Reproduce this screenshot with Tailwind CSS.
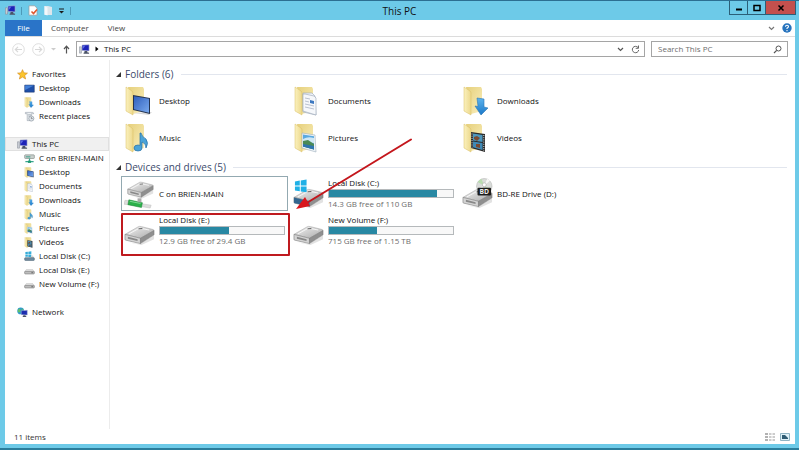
<!DOCTYPE html>
<html lang="en">
<head>
  <meta charset="UTF-8" />
  <meta name="viewport" content="width=device-width, initial-scale=1.0"/>
  <title>This PC</title>
  <script src="https://cdn.jsdelivr.net/npm/@tailwindcss/browser@4"></script>
</head>

<body class="min-h-screen flex flex-col bg-[#6dcae8] border-t border-t-[#2c6f92] border-b-2 border-b-[#2a7d9b] font-['Open_Sans','Noto_Sans',sans-serif] text-[8px] leading-[10px] text-[#111]">

  <!-- icons -->
  <svg class="absolute size-0" aria-hidden="true">
    <defs>
      <linearGradient id="flap" x1="0" x2="1"><stop offset="0" stop-color="#fbf1bd"/><stop offset="1" stop-color="#ecd88c"/></linearGradient>
      <linearGradient id="back" x1="0" x2="1" y2="1"><stop offset="0" stop-color="#e6d07c"/><stop offset="1" stop-color="#faefbd"/></linearGradient>
      <linearGradient id="screen" x2="1" y2="1"><stop offset="0" stop-color="#2f5fbd"/><stop offset="1" stop-color="#79a9ee"/></linearGradient>
      <linearGradient id="metal" x2="1" y2="1"><stop offset="0" stop-color="#f4f4f4"/><stop offset="1" stop-color="#a9a9a9"/></linearGradient>
      <linearGradient id="arrowBlue" x2="0" y2="1"><stop offset="0" stop-color="#5db4ee"/><stop offset="1" stop-color="#1a78c8"/></linearGradient>
    </defs>
    <symbol id="folder" viewBox="0 0 30 30">
      <path d="M4 1h15l1 2v22l-11 3z" fill="url(#back)"/>
      <path d="M2 1l6 4q1 1 1 2v22l-7-4z" fill="url(#flap)" stroke="#d9bd62" stroke-width=".5"/>
    </symbol>
    <symbol id="desktop" viewBox="0 0 30 30">
      <use href="#folder"/>
      <path d="M9 27l19-1-3 3z" fill="#d8d8d8"/>
      <path d="M9 9l17 3v16l-17-4z" fill="#24334f"/>
      <path d="M10 10.200l15 2.600v14l-15-3.600z" fill="url(#screen)"/>
    </symbol>
    <symbol id="documents" viewBox="0 0 30 30">
      <use href="#folder"/>
      <path d="M10 7h9l3 3 1 19-13-3z" fill="#eef2f8" stroke="#9aa7b8" stroke-width=".6"/>
      <path d="M12 8l9 2 2 2v17l-13-4V8z" fill="#f6f8fb" stroke="#98a4b6" stroke-width=".6"/>
      <path d="M12 12l5 1M12 15l4 1M12 18l9 2M12 21l9 2" stroke="#a9b3c4" stroke-width=".8"/>
      <path d="M17 14l4 1v3l-4-1z" fill="#3d78c0"/>
    </symbol>
    <symbol id="downloads" viewBox="0 0 30 30">
      <use href="#folder"/>
      <path d="M15 12l7 1v8l4 1-7 7-6-9 3 .5z" fill="url(#arrowBlue)" stroke="#2a76b5" stroke-width=".6"/>
    </symbol>
    <symbol id="music" viewBox="0 0 30 30">
      <use href="#folder"/>
      <path d="M17 10q1 4 5 6 3 4 0 9 0-5-4-6v6q0 3-4 3-4 0-4-3t4-3l2 .4V10z" fill="#4aa3d8" stroke="#226fa5" stroke-width=".7"/>
    </symbol>
    <symbol id="pictures" viewBox="0 0 30 30">
      <use href="#folder"/>
      <path d="M9 10l13 2 1 17-14-4z" fill="#eef3f7" stroke="#9fb0be" stroke-width=".6"/>
      <path d="M10 11.500l11 1.700v13.300l-11-3z" fill="#5aa9e0"/>
      <path d="M10 16q5-3 11-1v5l-11-1z" fill="#cfe8f5"/>
      <path d="M10 18l5-1 6 4v5.500l-11-3z" fill="#4c8a55"/>
      <path d="M10 21l11 2v3.500l-11-3z" fill="#2f75b0"/>
    </symbol>
    <symbol id="videos" viewBox="0 0 30 30">
      <use href="#folder"/>
      <path d="M9 9l14 2v18l-14-4z" fill="#2b2b2b"/>
      <path d="M11 10.500l9.500 1.500v7l-9.500-1.500z" fill="#4d97bd"/>
      <path d="M11 18.500l9.500 1.500v7l-9.500-2.700z" fill="#4089b5"/>
      <path d="M12 14l3-1 3 2-3 3-3-2zM14 21l4 0 0 4-4-1z" fill="#7a4a30"/>
      <path d="M10 10.500v14M21.800 12v16" stroke="#eee" stroke-width=".9" stroke-dasharray="1 1.200"/>
    </symbol>
    <symbol id="drive" viewBox="0 0 32 32">
      <path d="M4 28l13 2 14-9v4l-13 6z" fill="#e2e2e2"/>
      <path d="M1 20l14-8q1-.5 3 0l12 3q1 .5 1 1l-14 8z" fill="url(#metal)" stroke="#a5a5a5" stroke-width=".6"/>
      <path d="M1 20l16 4v5.500L2 26q-1 0-1-1z" fill="#d4d4d4" stroke="#8a8a8a" stroke-width=".7"/>
      <path d="M17 24l14-8v4.500l-14 9z" fill="#8f8f8f" stroke="#777" stroke-width=".5"/>
      <path d="M4 22.500l10 2.500v1.800L4 24.500z" fill="#888"/>
      <path d="M5 19.500l11-6 10 2" stroke="#fff" stroke-width=".8" fill="none"/>
      <path d="M15 14.200l4-.3" stroke="#555" stroke-width=".9"/>
    </symbol>
    <symbol id="netdrive" viewBox="0 0 32 32">
      <svg x="3" y="-7" width="28" height="30" viewBox="0 0 32 32"><use href="#drive"/></svg>
      <path d="M1 23l8 1 12 3 7 1-1 3-6-1-13-2-8-1z" fill="#dcdcdc" stroke="#bbb" stroke-width=".5"/>
      <path d="M5 22.500l14 3-1 5-14-3z" fill="#2bb04a" stroke="#168033" stroke-width=".5"/>
      <path d="M6 24l11 2.300" stroke="#8be09d" stroke-width=".9"/>
      <path d="M14 21h4v4h-4z" fill="#aaa"/>
    </symbol>
    <symbol id="windrive" viewBox="0 0 32 32">
      <use href="#drive"/>
      <path d="M1 20l16 4v5.500L2 26q-1 0-1-1z" fill="#33668f"/>
      <path d="M2 3.500l5-.8v5H2zM8 2.500l6-1v6.200H8zM2 8.700h5v5L2 13zM8 8.700h6v6L8 13.900z" fill="#1fb0e6"/>
    </symbol>
    <symbol id="pc" viewBox="0 0 12 12">
      <path d="M.5 3h2.200v7H.5z" fill="#c9cdd4" stroke="#7b828c" stroke-width=".5"/>
      <path d="M3.300 1.200l7.700-.4v6.700l-7.700-.5z" fill="#1c22b8" stroke="#b9bfd0" stroke-width=".6"/>
      <path d="M4 1.800l3-.1-2 3-1 .6z" fill="#5c69e0"/>
      <path d="M6 7.500h3v1.500l2 .5v1H5v-1l1-.5z" fill="#4b5366"/>
    </symbol>
    <symbol id="monitor" viewBox="0 0 12 12">
      <path d="M.8 2.300h10.400v7.700H.8z" fill="#1e4fa8" stroke="#17336b" stroke-width=".6"/>
      <path d="M1.200 2.700h9.600l-9.600 5z" fill="#4480d8"/>
    </symbol>
    <symbol id="star" viewBox="0 0 12 12">
      <path d="M6 .7l1.500 3.500 3.900.3-3 2.500 1 3.900L6 8.800 2.600 10.900l1-3.900-3-2.500 3.900-.3z" fill="#fbc52d" stroke="#d68f1f" stroke-width=".7"/>
    </symbol>
    <symbol id="recent" viewBox="0 0 12 12">
      <path d="M1.500 1.500h7.500q1.500 0 1.500 1.500H8v7.500H3.500V3H1.500z" fill="#edf0f3" stroke="#8e98a3" stroke-width=".6"/>
      <path d="M4.500 4h3M4.500 5.500h3" stroke="#8e98a3" stroke-width=".6"/>
      <circle cx="8" cy="8.200" r="2.800" fill="#e0e6ec" stroke="#77828e" stroke-width=".6"/>
      <path d="M8 6.500v1.800h1.500" stroke="#555" stroke-width=".6" fill="none"/>
    </symbol>
    <symbol id="sdrive" viewBox="0 0 12 12">
      <path d="M2.500 5h7l1.800 2.500H.7z" fill="#e3e3e3" stroke="#aaa" stroke-width=".4"/>
      <rect x=".7" y="7" width="10.600" height="2.800" rx=".8" fill="#bdbdbd" stroke="#737373" stroke-width=".6"/>
      <path d="M8 8.400h2" stroke="#444" stroke-width=".7"/>
    </symbol>
    <symbol id="swindrive" viewBox="0 0 12 12">
      <path d="M1.500 1.200l2.700-.3v2.500H1.500zM4.700.8l3.300-.4v3H4.700zM1.500 3.900h2.700v2.500l-2.700-.2zM4.700 3.900H8v3l-3.300-.4z" fill="#35acd8"/>
      <path d="M8 5h1.500l1.800 2.500H7z" fill="#d5d5d5"/>
      <rect x=".7" y="7.300" width="10.600" height="3" rx=".8" fill="#6e8ba0" stroke="#4c6373" stroke-width=".6"/>
    </symbol>
    <symbol id="snetdrive" viewBox="0 0 12 12">
      <rect x=".7" y="2" width="10.600" height="4" rx=".8" fill="#c9cfcc" stroke="#6f7a75" stroke-width=".6"/>
      <path d="M2 4.200h5" stroke="#2f9c86" stroke-width="1"/>
      <path d="M6 6v3M1.500 9.500h9" stroke="#3aa58f" stroke-width="1.300"/>
      <rect x="4.300" y="8.300" width="3.400" height="2.500" fill="#1f9a70"/>
    </symbol>
    <symbol id="network" viewBox="0 0 12 12">
      <circle cx="4" cy="4.300" r="3.700" fill="#2f9ad0"/>
      <path d="M2 1.700q2 0 2 2T1.500 6Q0 4 2 1.700zM5 1l2 2-1.500 1z" fill="#5fc06a"/>
      <path d="M4.700 4l6.500-.4v5.200l-6.500-.4z" fill="#1c2cb0" stroke="#aeb8d4" stroke-width=".5"/>
      <path d="M7 9h2l1.500 1.800H6z" fill="#4b5366"/>
    </symbol>
  </svg>

  <header class="relative h-[19px] flex items-center px-[5px]">
    <div class="flex items-center gap-[5px]">
      <svg class="size-[11px]"><use href="#pc"/></svg>
      <span class="w-px h-2 bg-[#4d9ab8]"></span>
      <button aria-label="Properties" class="ml-px">
        <svg class="w-[10px] h-[11px]" viewBox="0 0 10 11"><path d="M1 .8h5.500L9 3v7.200H1z" fill="#fff" stroke="#9a9a9a" stroke-width=".7"/><path d="M3.500 6.500l2 2L9 4.500" fill="none" stroke="#e0572e" stroke-width="1.600"/></svg>
      </button>
      <button aria-label="New folder" class="ml-px">
        <svg class="w-[9px] h-[11px]" viewBox="0 0 9 11"><path d="M.5 1H4l4 1v8H.5z" fill="#dde6ec"/><path d="M.5 1l3 1.500V10.500L.5 9.500z" fill="#f4f8fb"/></svg>
      </button>
      <button aria-label="Customize toolbar">
        <svg class="w-[7px] h-[6px]" viewBox="0 0 7 6"><path d="M1 1h5" stroke="#1a1a1a"/><path d="M1 3h5L3.500 5.500z" fill="#1a1a1a"/></svg>
      </button>
      <span class="w-px h-2 bg-[#4d9ab8]"></span>
    </div>
    <h1 class="absolute inset-x-0 text-center text-[10px] leading-[18px] pointer-events-none">This PC</h1>
    <div class="ml-auto -mr-[2px] self-start flex h-[14px] border border-t-0 border-[#2b5f78]">
      <button aria-label="Minimize" class="w-[18px] flex items-center justify-center border-r border-[#2b5f78]">
        <svg class="w-2 h-2" viewBox="0 0 8 8"><path d="M1 5.500h6" stroke="#000" stroke-width="2"/></svg>
      </button>
      <button aria-label="Maximize" class="w-[18px] flex items-center justify-center border-r border-[#2b5f78]">
        <svg class="w-2 h-2" viewBox="0 0 8 8"><path d="M1 1.500h6v5H1z" fill="none" stroke="#000" stroke-width="1.500"/></svg>
      </button>
      <button aria-label="Close" class="w-[29px] flex items-center justify-center bg-[#c3504d]">
        <svg class="w-2 h-2" viewBox="0 0 8 8"><path d="M1.500 1.500l5 5M6.500 1.500l-5 5" stroke="#000" stroke-width="1.500"/></svg>
      </button>
    </div>
  </header>

  <div class="flex-1 flex flex-col mx-[5px] mr-1 mb-[4px] bg-white">
    <nav class="h-[17px] flex items-stretch border-b border-[#dcdcdc] text-[#444]">
      <button class="w-[37px] bg-[#2a74c8] text-white">File</button>
      <button class="ml-[9px]">Computer</button>
      <button class="ml-[19px]">View</button>
      <div class="ml-auto flex items-center gap-[7px] pr-[3px]">
        <button aria-label="Expand ribbon"><svg class="w-[7px] h-[5px]" viewBox="0 0 7 5"><path d="M1 1l2.500 2.500L6 1" fill="none" stroke="#777" stroke-width="1.200"/></svg></button>
        <button aria-label="Help"><svg class="size-[10px]" viewBox="0 0 10 10"><circle cx="5" cy="5" r="4.700" fill="#2673bd"/><path d="M3.500 3.800q0-1.500 1.500-1.500t1.500 1.300Q6.500 4.500 5 5.200V6M5 7v1.200" fill="none" stroke="#fff" stroke-width="1.100"/></svg></button>
      </div>
    </nav>

    <div class="flex items-center gap-[6px] pt-[4px] pb-[3px] pl-[7px] pr-[7px]">
      <div class="flex items-center w-[58px] justify-between">
        <button aria-label="Back"><svg class="size-[13px]" viewBox="0 0 13 13"><circle cx="6.500" cy="6.500" r="5.800" fill="none" stroke="#dadada" stroke-width=".9"/><path d="M10 6.500H3.500M6 3.800L3.300 6.500 6 9.200" fill="none" stroke="#d8d8d8" stroke-width="1.200"/></svg></button>
        <button aria-label="Forward"><svg class="size-[13px]" viewBox="0 0 13 13"><circle cx="6.500" cy="6.500" r="5.800" fill="none" stroke="#dadada" stroke-width=".9"/><path d="M3 6.500h6.500M7 3.800l2.700 2.700L7 9.200" fill="none" stroke="#d8d8d8" stroke-width="1.200"/></svg></button>
        <button aria-label="Recent locations"><svg class="w-[5px] h-[4px]" viewBox="0 0 5 4"><path d="M0 1h5L2.500 3.500z" fill="#ccc"/></svg></button>
        <button aria-label="Up"><svg class="w-[7px] h-[9px]" viewBox="0 0 7 9"><path d="M3.500 8.500V1.200M1 4l2.500-2.800L6 4" fill="none" stroke="#555" stroke-width="1.200"/></svg></button>
      </div>
      <div class="flex-1 h-[16px] flex items-center border border-[#a5a5a5] pl-[2px] pr-1">
        <svg class="size-[11px]"><use href="#pc"/></svg>
        <svg class="ml-[5px] w-[4px] h-[6px]" viewBox="0 0 4 6"><path d="M.5.500L3.500 3l-3 2.500z" fill="#000"/></svg>
        <button class="ml-[5px]">This PC</button>
        <button aria-label="Previous locations" class="ml-auto"><svg class="w-[7px] h-[5px]" viewBox="0 0 7 5"><path d="M1 1l2.500 2.500L6 1" fill="none" stroke="#555" stroke-width="1.200"/></svg></button>
        <button aria-label="Refresh" class="ml-[7px]"><svg class="size-[9px]" viewBox="0 0 9 9"><path d="M7 2.500A3.200 3.200 0 1 0 7.700 5" fill="none" stroke="#666"/><path d="M7.500.5v2.800H4.700" fill="none" stroke="#666"/></svg></button>
      </div>
      <label class="w-[137px] h-[16px] flex items-center border border-[#a5a5a5] pl-[6px] pr-[5px]">
        <input type="search" aria-label="Search This PC" placeholder="Search This PC" class="flex-1 min-w-0 outline-none placeholder:text-[#6d6d6d]">
        <svg class="size-[9px]" viewBox="0 0 9 9"><circle cx="5.500" cy="3.500" r="2.500" fill="none" stroke="#555"/><path d="M3.700 5.300L1 8" stroke="#555" stroke-width="1.200"/></svg>
      </label>
    </div>

    <div class="flex-1 flex">
      <aside class="w-[105px] border-r border-[#ececec] pt-[7px] pb-4">
        <ul class="space-y-[14px]">
          <li>
            <a href="#" class="h-[14px] flex items-center gap-[4px] pl-[12px]"><svg class="size-[11px]"><use href="#star"/></svg>Favorites</a>
            <a href="#" class="h-[14px] flex items-center gap-[4px] pl-[19px]"><svg class="size-[11px]"><use href="#monitor"/></svg>Desktop</a>
            <a href="#" class="h-[14px] flex items-center gap-[4px] pl-[19px]"><svg class="size-[11px]"><use href="#downloads"/></svg>Downloads</a>
            <a href="#" class="h-[14px] flex items-center gap-[4px] pl-[19px]"><svg class="size-[11px]"><use href="#recent"/></svg>Recent places</a>
          </li>
          <li>
            <a href="#" class="h-[14px] flex items-center gap-[4px] pl-[12px] bg-[#f0f0f0] outline outline-[#e0e0e0] -outline-offset-1"><svg class="size-[11px]"><use href="#pc"/></svg>This PC</a>
            <a href="#" class="h-[14px] flex items-center gap-[4px] pl-[19px] whitespace-nowrap"><svg class="size-[11px]"><use href="#snetdrive"/></svg>C on BRIEN-MAIN</a>
            <a href="#" class="h-[14px] flex items-center gap-[4px] pl-[19px]"><svg class="size-[11px]"><use href="#desktop"/></svg>Desktop</a>
            <a href="#" class="h-[14px] flex items-center gap-[4px] pl-[19px]"><svg class="size-[11px]"><use href="#documents"/></svg>Documents</a>
            <a href="#" class="h-[14px] flex items-center gap-[4px] pl-[19px]"><svg class="size-[11px]"><use href="#downloads"/></svg>Downloads</a>
            <a href="#" class="h-[14px] flex items-center gap-[4px] pl-[19px]"><svg class="size-[11px]"><use href="#music"/></svg>Music</a>
            <a href="#" class="h-[14px] flex items-center gap-[4px] pl-[19px]"><svg class="size-[11px]"><use href="#pictures"/></svg>Pictures</a>
            <a href="#" class="h-[14px] flex items-center gap-[4px] pl-[19px]"><svg class="size-[11px]"><use href="#videos"/></svg>Videos</a>
            <a href="#" class="h-[14px] flex items-center gap-[4px] pl-[19px]"><svg class="size-[11px]"><use href="#swindrive"/></svg>Local Disk (C:)</a>
            <a href="#" class="h-[14px] flex items-center gap-[4px] pl-[19px]"><svg class="size-[11px]"><use href="#sdrive"/></svg>Local Disk (E:)</a>
            <a href="#" class="h-[14px] flex items-center gap-[4px] pl-[19px]"><svg class="size-[11px]"><use href="#sdrive"/></svg>New Volume (F:)</a>
          </li>
          <li>
            <a href="#" class="h-[14px] flex items-center gap-[4px] pl-[12px]"><svg class="size-[11px]"><use href="#network"/></svg>Network</a>
          </li>
        </ul>
      </aside>

      <main class="relative flex-1 pt-[6px] pl-[6px] pr-[8px]">
        <section>
          <h2 class="flex items-center gap-[7px] text-[10px] leading-[16px] text-[#3b4a6b]">
            <button class="flex items-center gap-[4px]"><svg class="size-[5px]" viewBox="0 0 5 5"><path d="M5 0v5H0z" fill="#333"/></svg>Folders (6)</button>
            <span class="flex-1 h-px bg-[#e2e6ee]"></span>
          </h2>
          <div class="grid grid-cols-[repeat(auto-fill,169px)] pl-[5px]">
            <a href="#" class="h-[37px] flex items-center gap-[5px] pl-[3px]"><svg class="size-[30px]"><use href="#desktop"/></svg>Desktop</a>
            <a href="#" class="h-[37px] flex items-center gap-[5px] pl-[3px]"><svg class="size-[30px]"><use href="#documents"/></svg>Documents</a>
            <a href="#" class="h-[37px] flex items-center gap-[5px] pl-[3px]"><svg class="size-[30px]"><use href="#downloads"/></svg>Downloads</a>
            <a href="#" class="h-[37px] flex items-center gap-[5px] pl-[3px]"><svg class="size-[30px]"><use href="#music"/></svg>Music</a>
            <a href="#" class="h-[37px] flex items-center gap-[5px] pl-[3px]"><svg class="size-[30px]"><use href="#pictures"/></svg>Pictures</a>
            <a href="#" class="h-[37px] flex items-center gap-[5px] pl-[3px]"><svg class="size-[30px]"><use href="#videos"/></svg>Videos</a>
          </div>
        </section>

        <section class="mt-[3px]">
          <h2 class="flex items-center gap-[7px] text-[10px] leading-[16px] text-[#3b4a6b]">
            <button class="flex items-center gap-[4px]"><svg class="size-[5px]" viewBox="0 0 5 5"><path d="M5 0v5H0z" fill="#333"/></svg>Devices and drives (5)</button>
            <span class="flex-1 h-px bg-[#e2e6ee]"></span>
          </h2>
          <div class="grid grid-cols-[repeat(auto-fill,169px)] pl-[5px]">
            <a href="#" class="h-[35px] my-px mr-[2px] flex items-center gap-[4px] pl-[2px] border border-[#93a9b1]"><svg class="size-[31px]"><use href="#netdrive"/></svg>C on BRIEN-MAIN</a>
            <a href="#" class="h-[37px] flex items-center gap-[4px] pl-[3px]">
              <svg class="size-[31px]"><use href="#windrive"/></svg>
              <span class="w-[126px]">
                <span class="block">Local Disk (C:)</span>
                <span class="block h-[9px] my-px border border-[#b5b9bb] bg-[#f8f8f8]"><span class="block h-full bg-[#2888a3]" style="width:87%"></span></span>
                <span class="block text-[#6d6d6d]">14.3 GB free of 110 GB</span>
              </span>
            </a>
            <a href="#" class="h-[37px] flex items-center gap-[4px] pl-[3px]">
              <svg class="size-[31px]" viewBox="0 0 32 32">
                <use href="#drive"/>
                <circle cx="23" cy="8.500" r="8" fill="#d9dcd9" stroke="#aaa" stroke-width=".5"/>
                <path d="M23 8l-7-4 4-3.300zM23 8l7 4-3 3z" fill="#b9dcb0"/>
                <path d="M23 8l3-7.300 3 2zM23 8l-7 3 2 3z" fill="#f7f7f7"/>
                <circle cx="23" cy="7" r="2" fill="#fff" stroke="#999" stroke-width=".5"/>
                <rect x="16" y="10" width="14" height="8" rx="1" fill="#1d1d1d"/>
                <text x="23" y="16.500" text-anchor="middle" font-size="7" font-weight="700" fill="#eee">BD</text>
              </svg>
              BD-RE Drive (D:)
            </a>
            <a href="#" class="relative h-[37px] flex items-center gap-[4px] pl-[3px]">
              <svg class="size-[31px]"><use href="#drive"/></svg>
              <span class="w-[126px]">
                <span class="block">Local Disk (E:)</span>
                <span class="block h-[9px] my-px border border-[#b5b9bb] bg-[#f8f8f8]"><span class="block h-full bg-[#2888a3]" style="width:56%"></span></span>
                <span class="block text-[#6d6d6d]">12.9 GB free of 29.4 GB</span>
              </span>
              <span class="absolute left-0 right-0 top-px -bottom-[7px] border-2 border-[#bf1a1f] rounded-[1px]"></span>
            </a>
            <a href="#" class="h-[37px] flex items-center gap-[4px] pl-[3px]">
              <svg class="size-[31px]"><use href="#drive"/></svg>
              <span class="w-[126px]">
                <span class="block">New Volume (F:)</span>
                <span class="block h-[9px] my-px border border-[#b5b9bb] bg-[#f8f8f8]"><span class="block h-full bg-[#2888a3]" style="width:39%"></span></span>
                <span class="block text-[#6d6d6d]">715 GB free of 1.15 TB</span>
              </span>
            </a>
          </div>
        </section>

        <!-- arrow pointing at Local Disk (E:) -->
        <svg class="absolute left-[186px] top-[78px] w-[118px] h-[74px] pointer-events-none" viewBox="0 0 118 74">
          <path d="M115 1.500L9 66" stroke="#c4161c" stroke-width="2" stroke-linecap="round"/>
          <path d="M0 71l9-12 5 9z" fill="#d8161c"/>
        </svg>
      </main>
    </div>

    <footer class="flex items-center h-[15px] pl-[9px] pr-[5px] text-[#333]">
      <span>11 items</span>
      <div class="ml-auto flex gap-[5px]">
        <button aria-label="Details view"><svg class="w-[10px] h-[8px]" viewBox="0 0 10 8"><path d="M0 1h3M0 4h3M0 7h3" stroke="#999" stroke-width="1.500"/><path d="M4 1h2.500M7.500 1H10M4 4h2.500M7.500 4H10M4 7h2.500M7.500 7H10" stroke="#999"/></svg></button>
        <button aria-label="Large icons view"><svg class="w-[10px] h-[8px]" viewBox="0 0 10 8"><path d="M.5.500h9v7h-9z" fill="#dff1f8" stroke="#8fb4c4"/><path d="M2 2h3l3 3v1H2z" fill="#2f5c74"/></svg></button>
      </div>
    </footer>
  </div>

</body>
</html>
